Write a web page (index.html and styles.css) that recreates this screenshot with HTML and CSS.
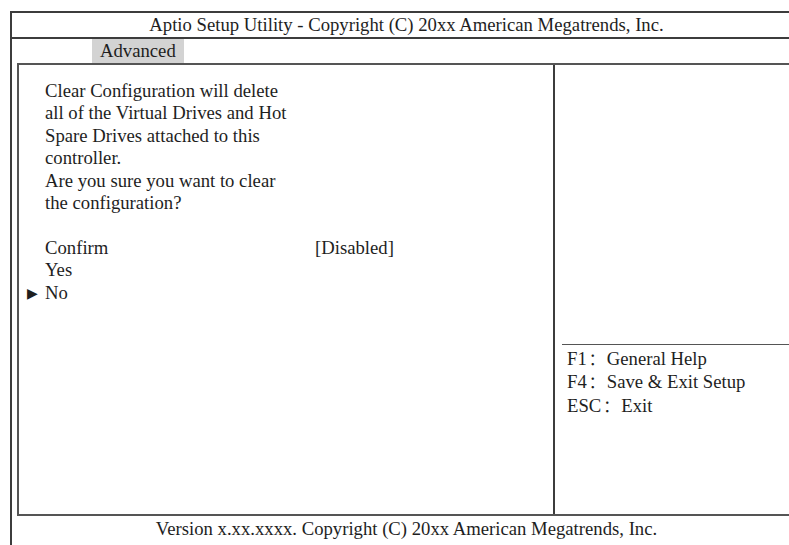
FILE: index.html
```html
<!DOCTYPE html>
<html>
<head>
<meta charset="utf-8">
<link rel="stylesheet" href="styles.css">
</head>
<body>
<div class="frame">
  <div class="title">Aptio Setup Utility - Copyright (C) 20xx American Megatrends, Inc.</div>
  <div class="tabs"><span class="tab">Advanced</span></div>
  <div class="main">
    <div class="left">
      <p class="desc">Clear Configuration will delete<br>all of the Virtual Drives and Hot<br>Spare Drives attached to this<br>controller.<br>Are you sure you want to clear<br>the configuration?</p>
      <div class="row"><span class="label">Confirm</span><span class="value">[Disabled]</span></div>
      <div class="row"><span class="label">Yes</span></div>
      <div class="row"><span class="marker">&#9654;</span><span class="label">No</span></div>
    </div>
    <div class="right">
      <div class="help">
        <div class="key">F1<span class="colon">：</span>General Help</div>
        <div class="key">F4<span class="colon">：</span>Save &amp; Exit Setup</div>
        <div class="key">ESC<span class="colon">：</span>Exit</div>
      </div>
    </div>
  </div>
  <div class="footer">Version x.xx.xxxx. Copyright (C) 20xx American Megatrends, Inc.</div>
</div>
</body>
</html>
```
FILE: styles.css
```css
html, body {
  margin: 0;
  padding: 0;
  background: #ffffff;
  overflow: hidden;
}
body {
  width: 789px;
  height: 545px;
  font-family: "Liberation Serif", "Times New Roman", serif;
  font-size: 18.7px;
  color: #1e1e1e;
}
.frame {
  margin: 11px 0 0 10px;
  width: 800px;
  height: 560px;
  border-left: 2px solid #3c3c3c;
  border-top: 2px solid #3c3c3c;
  box-sizing: border-box;
}
.title {
  height: 24px;
  line-height: 24px;
  border-bottom: 2px solid #3c3c3c;
  text-align: center;
  padding-right: 9px;
}
.tabs {
  height: 24px;
  padding-left: 80px;
  display: flex;
}
.tab {
  background: #d3d3d3;
  width: 92px;
  box-sizing: border-box;
  padding-left: 8px;
  line-height: 24px;
}
.main {
  margin-left: 5px;
  height: 453px;
  box-sizing: border-box;
  border-top: 2px solid #555555;
  border-left: 2px solid #555555;
  border-bottom: 2px solid #555555;
  display: flex;
}
.left {
  width: 536px;
  box-sizing: border-box;
  border-right: 2px solid #3c3c3c;
  padding: 15px 0 0 26px;
  line-height: 22.4px;
}
.desc {
  margin: 0 0 22.4px 0;
}
.row {
  display: flex;
  height: 22.4px;
}
.marker {
  width: 18px;
  margin-left: -18px;
  font-size: 14px;
  font-family: "DejaVu Sans", sans-serif;
  line-height: 22.4px;
}
.label {
  width: 270px;
}
.right {
  flex: 1;
  padding-top: 279px;
}
.help {
  margin-left: 7px;
  border-top: 1px solid #555555;
  padding: 2px 0 0 5px;
  line-height: 22.4px;
}
.colon {
  font-family: "Noto Sans CJK SC", sans-serif;
  font-size: 16px;
  padding: 0 2px;
}
.footer {
  height: 26px;
  line-height: 26px;
  text-align: center;
  padding-right: 9px;
}
```
